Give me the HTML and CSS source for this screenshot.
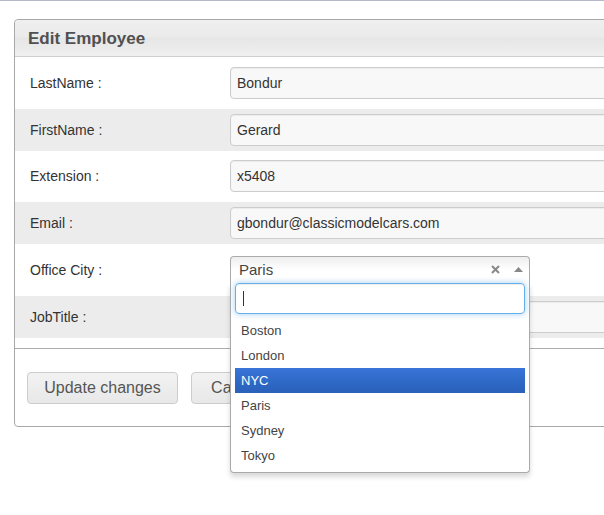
FILE: index.html
```html
<!DOCTYPE html>
<html>
<head>
<meta charset="utf-8">
<link rel="stylesheet" href="styles.css">
</head>
<body>
<div class="topline"></div>
<div class="page">
  <div class="panel">
    <div class="panel-head">Edit Employee</div>
    <div class="panel-body">
      <div class="row"><div class="label">LastName :</div><div class="field">Bondur</div></div>
      <div class="row alt"><div class="label">FirstName :</div><div class="field">Gerard</div></div>
      <div class="row"><div class="label">Extension :</div><div class="field">x5408</div></div>
      <div class="row alt"><div class="label">Email :</div><div class="field">gbondur@classicmodelcars.com</div></div>
      <div class="row"><div class="label">Office City :</div>
        <div class="s2">
          <div class="s2-choice">
            <span class="s2-text">Paris</span>
            <svg class="s2-clear" width="9" height="9" viewBox="0 0 9 9"><path d="M1 1 L8 8 M8 1 L1 8" stroke="#888" stroke-width="2"/></svg>
            <svg class="s2-arrow" width="9" height="5" viewBox="0 0 9 5"><path d="M0 5 L4.5 0 L9 5 Z" fill="#888"/></svg>
          </div>
          <div class="s2-drop">
            <div class="s2-search"><span class="caret"></span></div>
            <ul class="s2-results">
              <li>Boston</li>
              <li>London</li>
              <li class="hl">NYC</li>
              <li>Paris</li>
              <li>Sydney</li>
              <li>Tokyo</li>
            </ul>
          </div>
        </div>
      </div>
      <div class="row alt"><div class="label">JobTitle :</div><div class="field"></div></div>
    </div>
    <div class="panel-foot">
      <button class="btn">Update changes</button>
      <button class="btn">Cancel</button>
    </div>
  </div>
</div>
</body>
</html>
```
FILE: styles.css
```css
html {
  overflow: hidden;
}
body {
  margin: 0;
  padding: 0;
  min-height: 515px;
  background: #fff;
  font-family: "Liberation Sans", Arial, sans-serif;
  color: #333;
}
.topline {
  height: 1px;
  background: #b4b8c9;
}
.page {
  padding: 18px 0 70px 14px;
  width: 604px;
  box-sizing: border-box;
  overflow-x: clip;
}
.panel {
  width: 700px;
  border: 1px solid #a8a8a8;
  border-radius: 4px;
  box-sizing: border-box;
}
.panel-head {
  height: 37px;
  box-sizing: border-box;
  border-bottom: 1px solid #cfcfcf;
  border-radius: 4px 4px 0 0;
  background: linear-gradient(to bottom, #efefef 0%, #ebebeb 45%, #e6e6e6 52%, #f0f0f0 100%);
  padding: 1px 0 0 13px;
  font-size: 17px;
  font-weight: bold;
  color: #505050;
  line-height: 36px;
}
.panel-body {
  padding-bottom: 10px;
  border-bottom: 1px solid #acacac;
}
.row {
  display: flex;
  align-items: center;
  height: 51.5px;
  padding: 0 15px;
}
.row.alt {
  height: 42px;
  background: #ececec;
}
.label {
  width: 200px;
  flex: none;
  font-size: 14px;
  color: #333;
}
.field {
  flex: 1;
  height: 32px;
  box-sizing: border-box;
  border: 1px solid #cccccc;
  border-radius: 4px;
  background: #f8f8f8;
  box-shadow: inset 0 1px 1px rgba(0,0,0,0.05);
  padding: 0 6px;
  font-size: 14px;
  line-height: 30px;
  color: #333;
}
.s2 {
  position: relative;
  width: 300px;
  height: 28px;
  z-index: 5;
}
.s2-choice {
  display: flex;
  align-items: center;
  height: 27px;
  box-sizing: border-box;
  border: 1px solid #aaa;
  border-bottom: 0;
  border-radius: 4px 4px 0 0;
  background: linear-gradient(to bottom, #eeeeee 0%, #ffffff 50%);
  padding: 0 6px 0 8px;
}
.s2-text {
  flex: 1;
  font-size: 15px;
  color: #444;
  line-height: 26px;
}
.s2-clear {
  margin-right: 14px;
}
.s2-drop {
  position: absolute;
  top: 27px;
  left: 0;
  width: 300px;
  box-sizing: border-box;
  border: 1px solid #aaa;
  border-top: 0;
  border-radius: 0 0 4px 4px;
  background: #fff;
  padding: 0 4px 4px 4px;
  box-shadow: 0 4px 5px rgba(0,0,0,0.15);
}
.s2-search {
  height: 31px;
  box-sizing: border-box;
  border: 1px solid #66afe9;
  border-radius: 4px;
  box-shadow: inset 0 1px 1px rgba(0,0,0,0.075), 0 0 6px rgba(102,175,233,0.6);
  display: flex;
  align-items: center;
  padding-left: 7px;
}
.caret {
  width: 1px;
  height: 15px;
  background: #333;
}
.s2-results {
  list-style: none;
  margin: 4px 0 0 0;
  padding: 0;
}
.s2-results li {
  height: 25px;
  line-height: 25px;
  padding-left: 6px;
  font-size: 13px;
  color: #444;
}
.s2-results li.hl {
  background: linear-gradient(to bottom, #3875d7 0%, #2a62bc 90%);
  color: #fff;
}
.panel-foot {
  display: flex;
  gap: 13px;
  padding: 23px 12px 22px;
}
.btn {
  height: 32px;
  padding: 0 15px;
  border: 1px solid #cccccc;
  border-radius: 4px;
  background: linear-gradient(to bottom, #f2f2f2 0%, #e8e8e8 100%);
  font-family: "Liberation Sans", Arial, sans-serif;
  font-size: 16px;
  color: #555;
  width: 151px;
}
.btn + .btn {
  width: 90px;
}
```
